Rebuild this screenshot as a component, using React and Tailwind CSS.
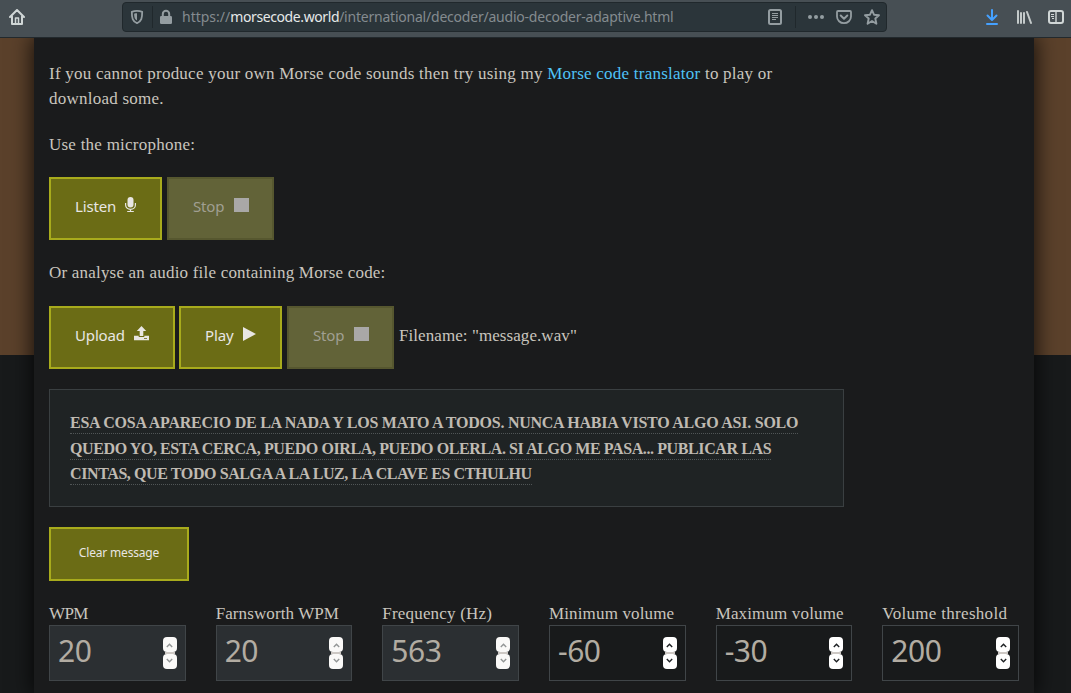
import React from "react";

const serif = "font-['Liberation_Serif','Noto_Serif',serif]";
const sans = "font-['Noto_Sans',sans-serif]";

function HomeIcon() {
  return (
    <svg className="h-4 w-4" viewBox="0 0 16 16" fill="none" stroke="#d0d6d6" strokeWidth="2" strokeLinejoin="round" strokeLinecap="round">
      <path d="M1 8 8 1l7 7M3 7.500V15h10V7.500" />
      <path d="M6.500 14V9h3v5" strokeWidth="1.500" strokeLinecap="butt" />
    </svg>
  );
}

function ShieldIcon() {
  return (
    <svg className="h-4 w-4" viewBox="0 0 16 16" fill="none">
      <path d="M8 1.900c2 0 3.700.3 5.200.9C13.200 9 12.500 12.200 8 14.200 3.500 12.200 2.800 9 2.800 2.800 4.300 2.200 6 1.900 8 1.900Z" stroke="#949da1" strokeWidth="1.800" strokeLinejoin="round" />
      <path d="M8 4.300v7.300C5.800 10.300 5.200 8.500 5.100 4.700 6 4.400 7 4.300 8 4.300Z" fill="#949da1" />
    </svg>
  );
}

function LockIcon() {
  return (
    <svg className="h-4 w-4" viewBox="0 0 16 16" fill="none">
      <rect x="2" y="7" width="12" height="8" rx="1.200" fill="#949da1" />
      <path d="M4.800 8V5a3.200 3.200 0 0 1 6.400 0v3" stroke="#949da1" strokeWidth="2" />
    </svg>
  );
}

function ReaderIcon() {
  return (
    <svg className="h-4 w-4" viewBox="0 0 16 16" fill="none" stroke="#949da1">
      <rect x="2" y="1" width="12" height="14" rx="1.500" strokeWidth="2" />
      <path d="M5 4.500h6M5 6.500h6M5 8.500h6M5 10.500h4" />
    </svg>
  );
}

function DotsIcon() {
  return (
    <svg className="h-4 w-4" viewBox="0 0 16 16" fill="#949da1">
      <circle cx="2" cy="8" r="2" />
      <circle cx="8" cy="8" r="2" />
      <circle cx="14" cy="8" r="2" />
    </svg>
  );
}

function PocketIcon() {
  return (
    <svg className="h-4 w-4" viewBox="0 0 16 16" fill="none" stroke="#949da1" strokeWidth="2" strokeLinecap="round" strokeLinejoin="round">
      <path d="M2 2h12a1 1 0 0 1 1 1v4.500a7 6.700 0 0 1-14 0V3a1 1 0 0 1 1-1Z" strokeWidth="1.800" />
      <path d="m4.700 6.500 3.300 3.200 3.300-3.200" />
    </svg>
  );
}

function StarIcon() {
  return (
    <svg className="h-4 w-4" viewBox="0 0 16 16" fill="none" stroke="#949da1" strokeWidth="1.900" strokeLinejoin="round">
      <path d="m8 1.200 2 4.500 5 .5-3.700 3.300 1.100 5.200L8 12l-4.400 2.700 1.100-5.200L1 6.200l5-.5Z" />
    </svg>
  );
}

function DownloadIcon() {
  return (
    <svg className="h-4 w-4" viewBox="0 0 16 16" fill="none" stroke="#45a1ff" strokeWidth="2" strokeLinecap="round" strokeLinejoin="round">
      <path d="M8 1v9.500M3.500 6.500 8 11l4.500-4.500M3 15h10" />
    </svg>
  );
}

function LibraryIcon() {
  return (
    <svg className="h-4 w-4" viewBox="0 0 16 16" fill="none" stroke="#c4caca" strokeWidth="2" strokeLinecap="round">
      <path d="M2 2v12M5 4v10M8 4v10M11 3l4 11" />
    </svg>
  );
}

function SidebarIcon() {
  return (
    <svg className="h-4 w-4" viewBox="0 0 16 16" fill="none" stroke="#d0d6d6">
      <rect x="1" y="2" width="14" height="12" rx="2" strokeWidth="2" />
      <path d="M8 2v12" strokeWidth="1.400" />
      <path d="M3 5.500h3M3 7.500h3M4 9.500h2" />
    </svg>
  );
}

function MicIcon() {
  return (
    <svg className="h-4 w-[11px]" viewBox="0 0 11 16" fill="none">
      <rect x="2.500" y="0" width="6" height="10.500" rx="3" fill="#e8e6e3" />
      <path d="M.6 6v2a4.900 4.400 0 0 0 9.800 0V6M5.500 12v3M2.200 14.500h6.600" stroke="#e8e6e3" strokeWidth="1.200" />
    </svg>
  );
}

function UploadIcon() {
  return (
    <svg className="h-[15px] w-[15px]" viewBox="0 0 15 15" fill="#e8e6e3">
      <path d="M7.500 0 12.200 5H9.300v5H5.700V5H2.800ZM0 9.800h4.700V11h5.600V9.800H15V14.200H0Z" />
      <path d="M10 12h3v.8h-3Z" fill="#6b6c15" />
    </svg>
  );
}

function PlayIcon() {
  return (
    <svg className="h-[15px] w-[13px]" viewBox="0 0 13 15" fill="#e8e6e3">
      <path d="M0 1 13 8 0 15Z" />
    </svg>
  );
}

function StopIcon() {
  return <span className="mt-px block h-[14px] w-[15px] bg-[#a9a8a7]" />;
}

function ActionButton({ label, labelClass, icon, className, disabled }) {
  return (
    <button
      disabled={disabled}
      className={`${sans} flex h-[63px] shrink-0 border-2 pl-6 pt-[15px] text-[15px] leading-6 tracking-[-0.15px] ${
        disabled ? "border-[#56572f] bg-[#626338] text-[#a09f92]" : "border-[#a8ab1c] bg-[#6b6c15] text-[#e8e6e3]"
      } ${className}`}
    >
      <span className={`block shrink-0 whitespace-nowrap text-left ${labelClass}`}>{label}</span>
      <span className="block pt-[3px]">{icon}</span>
    </button>
  );
}

function Spinner({ disabled }) {
  const tone = disabled ? "bg-[#faf9f8]" : "bg-white";
  const stroke = disabled ? "#929595" : "#1d2023";
  return (
    <span className="flex h-8 w-[14px] flex-col items-center">
      <span className={`flex h-[15px] w-full items-center justify-center rounded ${tone}`}>
        <svg className="mt-0.5 h-[5px] w-[7px]" viewBox="0 0 7 5" fill="none" stroke={stroke} strokeWidth="1.400">
          <path d="m.8 4 2.700-2.700L6.200 4" />
        </svg>
      </span>
      <span className="h-[2px] w-[10px] bg-[#cdc8c4]" />
      <span className={`flex h-[15px] w-full items-center justify-center rounded ${tone}`}>
        <svg className="mb-0.5 h-[5px] w-[7px]" viewBox="0 0 7 5" fill="none" stroke={stroke} strokeWidth="1.400">
          <path d="m.8 1 2.700 2.700L6.200 1" />
        </svg>
      </span>
    </span>
  );
}

const fields = [
  { label: "WPM", value: "20", disabled: true, spacing: "tracking-[-0.6px]" },
  { label: "Farnsworth WPM", value: "20", disabled: true, spacing: "tracking-[0.1px]" },
  { label: "Frequency (Hz)", value: "563", disabled: true, spacing: "tracking-[0.18px]" },
  { label: "Minimum volume", value: "-60", spacing: "tracking-[0.14px]" },
  { label: "Maximum volume", value: "-30", spacing: "tracking-[0.14px]" },
  { label: "Volume threshold", value: "200", spacing: "tracking-[0.3px]" },
];

function Field({ label, value, disabled, spacing }) {
  return (
    <div className="px-[15px]">
      <div className={`h-[23px] whitespace-nowrap leading-[23px] ${spacing}`}>{label}</div>
      <div className={`flex h-14 justify-between border border-[#404548] px-2 ${disabled ? "bg-[#2b2f32]" : "bg-[#181a1b]"}`}>
        <span className={`${sans} text-[30px] leading-[49px] tracking-[-0.5px] text-[#b2aca2]`}>{value}</span>
        <span className="pt-[11px]">
          <Spinner disabled={disabled} />
        </span>
      </div>
    </div>
  );
}

const message = [
  { text: "ESA COSA APARECIO DE LA NADA Y LOS MATO A TODOS. NUNCA HABIA VISTO ALGO ASI. SOLO", spacing: "tracking-[-0.245px]" },
  { text: "QUEDO YO, ESTA CERCA, PUEDO OIRLA, PUEDO OLERLA. SI ALGO ME PASA... PUBLICAR LAS", spacing: "tracking-[-0.4px]" },
  { text: "CINTAS, QUE TODO SALGA A LA LUZ, LA CLAVE ES CTHULHU", spacing: "tracking-[-0.4px]" },
];

function Toolbar() {
  return (
    <header className={`${sans} relative z-10 flex h-[38px] shrink-0 border-b border-[#22292d] bg-[#474f54]`}>
      <div className="w-[122px] shrink-0 pl-[9px] pt-[9px]">
        <HomeIcon />
      </div>
      <div className="mt-0.5 flex h-[30px] w-[765px] shrink-0 items-center rounded border border-[#20282c] bg-[#2b353a] pb-px">
        <span className="ml-[6px]"><ShieldIcon /></span>
        <span className="ml-[7px] h-[22px] w-px bg-[#20282c]" />
        <span className="ml-[5px]"><LockIcon /></span>
        <span className="ml-2 mt-px w-[585px] whitespace-nowrap text-[14px] leading-5 text-[#848b8f]">
          <span>https://</span>
          <span className="tracking-[-0.4px] text-[#e6e9e9]">morsecode.world</span>
          <span className="tracking-[-0.22px]">/international/decoder/audio-decoder-adaptive.html</span>
        </span>
        <span><ReaderIcon /></span>
        <span className="ml-3 h-[22px] w-px bg-[#20282c]" />
        <span className="ml-3"><DotsIcon /></span>
        <span className="ml-3"><PocketIcon /></span>
        <span className="ml-3"><StarIcon /></span>
      </div>
      <div className="ml-[97px] flex gap-4 pt-[9px]">
        <DownloadIcon />
        <LibraryIcon />
        <SidebarIcon />
      </div>
    </header>
  );
}

export default function App() {
  return (
    <div className="flex h-[693px] w-[1071px] flex-col overflow-hidden bg-[#181a1b]">
      <Toolbar />
      <div className="flex flex-1 justify-center bg-[linear-gradient(#5b412b_317px,#181a1b_317px)] pr-[3px]">
        <main className={`${serif} w-[1000px] bg-[#1a1b1c] pt-[23px] text-[17px] leading-[25px] text-[#c9c5be] shadow-[0_0_20px_2px_rgba(0,0,0,0.75)]`}>
          <div className="px-[15px]">
            <p className="whitespace-nowrap tracking-[0.24px]">
              If you cannot produce your own Morse code sounds then try using my <a className="text-[#4fc3f7]">Morse code translator</a> to play or
              <br />
              download some.
            </p>
            <p className="mt-[21px] tracking-[0.24px]">Use the microphone:</p>
            <div className="mt-5 flex">
              <ActionButton label="Listen" labelClass="w-[50px]" icon={<MicIcon />} className="w-[113px]" />
              <ActionButton label="Stop" labelClass="w-[41px]" icon={<StopIcon />} className="ml-[5px] w-[107px]" disabled />
            </div>
            <p className="mt-5 tracking-[0.2px]">Or analyse an audio file containing Morse code:</p>
            <div className="mt-[21px] flex">
              <ActionButton label="Upload" labelClass="w-[59px]" icon={<UploadIcon />} className="w-[126px]" />
              <ActionButton label="Play" labelClass="w-[38px]" icon={<PlayIcon />} className="ml-1 w-[103px]" />
              <ActionButton label="Stop" labelClass="w-[41px]" icon={<StopIcon />} className="ml-[5px] w-[107px]" disabled />
              <span className="ml-[5px] pt-[17px] tracking-[0.07px]">Filename: "message.wav"</span>
            </div>
            <div className="mt-5 h-[118px] w-[795px] border border-[#3a3f41] bg-[#1f2324] pl-5 pt-5 font-bold leading-[25.500px] text-[#bfbab2]">
              <div className="flex flex-col items-start whitespace-nowrap text-[16px]">
                {message.map((line) => (
                  <span key={line.text} className="h-[25.500px]">
                    <span className={`inline-block h-6 border-b border-dotted border-[#505556] ${line.spacing}`}>{line.text}</span>
                  </span>
                ))}
              </div>
            </div>
            <button className={`${sans} mt-5 block h-[54px] w-[140px] border-2 border-[#a8ab1c] bg-[#6b6c15] pb-1 text-[12px] tracking-[-0.18px] text-[#e8e6e3]`}>
              Clear message
            </button>
          </div>
          <div className="mt-[21px] grid grid-cols-6">
            {fields.map((field) => <Field key={field.label} {...field} />)}
          </div>
        </main>
      </div>
    </div>
  );
}
